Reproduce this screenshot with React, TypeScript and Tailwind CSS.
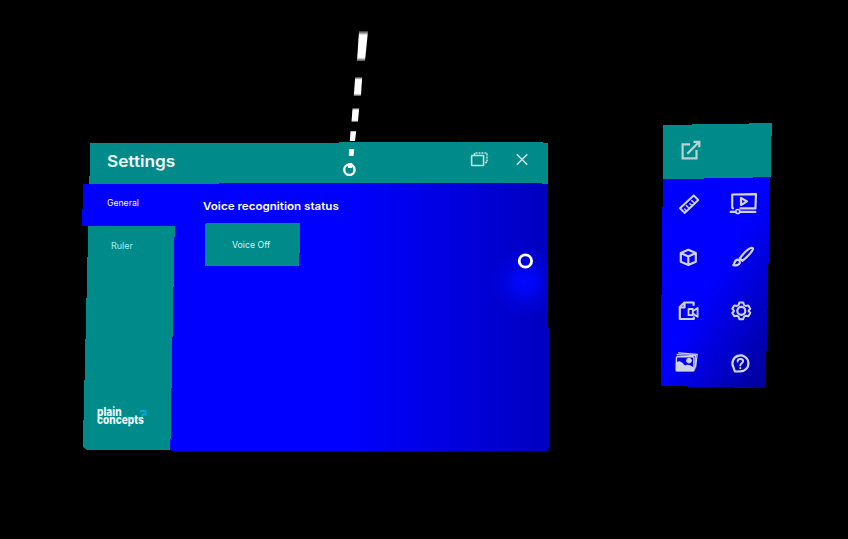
import type { ReactNode } from 'react';

const ICON = '#d0d3e6';

/** One cell of the tool palette; the view box is expressed in scene coordinates. */
function Tool({ box, label, children }: { box: string; label: string; children: ReactNode }) {
  return (
    <button aria-label={label} className="block h-[53px] w-[53px]">
      <svg viewBox={box} className="h-[53px] w-[53px]" fill="none" stroke={ICON} strokeWidth="2.2" strokeLinejoin="round" strokeLinecap="round">
        {children}
      </svg>
    </button>
  );
}

function Header() {
  return (
    <header className="flex h-[42px] bg-[#008b8b] pl-[25px] [clip-path:polygon(8px_1px,257px_1px,257px_0,461px_0,461px_1px,466px_1px,466px_42px,460px_42px,460px_41px,137px_41px,137px_42px,7px_42px,7px_34px,8px_34px)]">
      <h1 className="w-[338px] pt-[7px] text-[16px] leading-[24px] font-semibold text-[#f2f7f7]">
        <span className="inline-block origin-left scale-x-[1.075]">Settings</span>
      </h1>
      <svg viewBox="445 142 103 42" className="h-[42px] w-[103px]" fill="none" stroke="#c9dddd" strokeWidth="1.6">
        <rect x="471.6" y="155.5" width="12" height="10" rx="0.5" />
        <path d="M474.5 155v-2h12.5v9.5h-3" strokeDasharray="2 1" />
        <path d="M516.8 154.2l10.5 10.5M527.3 154.2l-10.5 10.5" />
      </svg>
    </header>
  );
}

function Sidebar() {
  return (
    <nav className="h-[267px] w-[93px] text-[9px] leading-[12px] text-white">
      <div className="h-[42px] bg-[#0000ff] pt-[13px] pl-[25px] [clip-path:polygon(1px_0,93px_0,93px_42px,0_42px,0_25px,1px_25px)]">
        <span className="inline-block origin-left scale-x-[0.96]">General</span>
      </div>
      <div className="flex h-[224px] flex-col justify-between bg-[#008b8b] [clip-path:polygon(6px_0,93px_0,93px_11px,92px_11px,92px_61px,91px_61px,91px_111px,90px_111px,90px_162px,89px_162px,89px_213px,88px_213px,88px_224px,5px_224px,1px_221px,1px_194px,2px_194px,2px_154px,3px_154px,3px_113px,4px_113px,4px_72px,5px_72px,5px_31px,6px_31px)]">
        <div className="pt-[14px] pl-[29px] text-[#a9eeee]">
          <span className="inline-block origin-left">Ruler</span>
        </div>
        <div className="flex h-[42px] pl-[15px] text-[11.5px] leading-[8px] font-extrabold text-[#eef7f7]">
          <div className="w-[49px]">
            <div className="w-fit origin-left scale-x-[0.88]">plain</div>
            <div className="w-fit origin-left scale-x-[0.88]">concepts</div>
          </div>
          <svg viewBox="0 0 8 9" className="-ml-[7px] h-[9px] w-[8px] translate-y-[1px]" fill="none" stroke="#00a9e0" strokeWidth="2">
            <path d="M1 2h5.5v4.5M2.5 7l3-2.5" />
          </svg>
        </div>
      </div>
    </nav>
  );
}

function SettingsWindow() {
  return (
    <section className="absolute top-[142px] left-[82px] h-[309px] w-[467px]">
      <div className="absolute inset-x-0 top-[41px] h-[268px] bg-[linear-gradient(90deg,#0000ff_56%,#0000e4_76%,#0000ce_90%,#0000c0_100%)] [clip-path:polygon(88px_0,460px_0,461px_1px,465px_1px,466px_3px,466px_145px,467px_145px,467px_265px,465px_268px,90px_268px,88px_266px)]">
        <div className="h-full w-full bg-[radial-gradient(circle_at_443px_99px,#0008ff_0px,#0008ffcc_9px,#0008ff55_20px,#0008ff00_35px)]" />
      </div>
      <div className="relative">
        <Header />
        <div className="flex">
          <Sidebar />
          <main className="pt-[14px] pl-[28px]">
            <h2 className="text-[11px] leading-[16px] font-semibold whitespace-nowrap text-white">
              <span className="inline-block origin-left scale-x-[1.055]">Voice recognition status</span>
            </h2>
            <button className="mt-[9px] ml-[2px] flex h-[43px] w-[95px] items-center bg-[#008b8b] pl-[27px] text-[9px] text-[#dcf4f4] [clip-path:polygon(1px_0,95px_0,95px_30px,94px_30px,94px_43px,0_43px,0_1px,1px_1px)]">
              <span className="inline-block origin-left scale-x-[0.97] whitespace-nowrap">Voice Off</span>
            </button>
          </main>
        </div>
      </div>
    </section>
  );
}

function ToolPalette() {
  return (
    <section className="absolute top-[123px] left-[661px] w-[111px]">
      <div className="h-[56px] bg-[#008b8b] [clip-path:polygon(2px_2px,31px_2px,31px_1px,88px_1px,88px_0,111px_0,111px_13px,110px_13px,110px_54px,92px_54px,92px_55px,43px_55px,43px_56px,2px_56px)]">
        <svg viewBox="661 123 111 56" className="h-[56px] w-[111px]" fill="none" stroke="#b9d3d3" strokeWidth="2.2">
          <path d="M690 144.4H682.6V158.3H696.5V150" />
          <path d="M687.3 153.8L698.5 142.5M693.5 141.9H699.3V147.3" />
        </svg>
      </div>
      <div className="-mt-[2px] grid h-[211px] grid-cols-[53px_53px] bg-[linear-gradient(120deg,#0000ff_48%,#0000c4_76%,#000090_100%)] pt-[1px] pl-[1px] [clip-path:polygon(2px_2px,43px_2px,43px_1px,92px_1px,92px_0,109px_0,109px_13px,108px_13px,108px_87px,107px_87px,107px_131px,106px_131px,106px_174px,105px_174px,105px_211px,72px_211px,72px_210px,26px_210px,26px_209px,0_209px,0_118px,1px_118px,1px_30px,2px_30px)]">
        <Tool label="Ruler" box="662 178 53 53">
          <path d="M680 208.3L693.7 195.4 698.3 200 684.6 212.9Z" strokeWidth="2" />
          <path d="M686.5 211L684.5 209M689.2 208.5L686.3 205.6M692 205.8L690 203.8M694.6 203.3L691.7 200.4" strokeWidth="1.4" />
        </Tool>
        <Tool label="Video" box="715 178 53 53">
          <path d="M733 208.3L732.2 207.7V194.5L756 194.1 755.4 208.4H740.5M730.7 211.9H735.3M740.3 211.9H755.4" />
          <circle cx="737.8" cy="211.5" r="2" strokeWidth="1.7" />
          <path d="M741 198V205L747 201.4Z" />
        </Tool>
        <Tool label="Model" box="662 231 53 53">
          <path d="M688.3 249.8L695.8 253.1V261.7L688.3 265.1 680.8 261.7V253.1ZM680.8 253.1L688.3 256.6 695.8 253.1M688.3 256.6V265.1" />
        </Tool>
        <Tool label="Draw" box="715 231 53 53">
          <path d="M739.8 258.3C743.5 253.5 747 248.8 751.5 247.8Q753.6 247.8 752.6 250C750.3 254.2 746.4 257.6 742.4 260.8Z" />
          <path d="M733.2 265C734.8 264.8 734 260 737.3 259.6 740 259.6 740.8 262.3 739 264.2 737.2 265.6 735 265.7 733.2 265Z" />
        </Tool>
        <Tool label="Recording" box="662 284 53 53">
          <path d="M693.6 305V302.5H684.3L679.8 307V319H693.8V317.3M680 307.5H684.5V302.8" />
          <rect x="688.5" y="309" width="4.3" height="6.2" strokeWidth="1.8" />
          <path d="M693 311L697.6 308V316.8L693 313.8" strokeWidth="1.8" />
        </Tool>
        <Tool label="Settings" box="715 284 53 53">
          <path d="M739.4 302.4H743.2L744 305 745.8 306 748.3 305.4 750.3 308.7 748.5 310.9 750.3 313 748.3 316.3 745.8 315.7 744 316.8 743.2 319.2H739.4L738.6 316.8 736.8 315.7 734.3 316.3 732.3 313 734.1 310.9 732.3 308.7 734.3 305.4 736.8 306 738.6 305Z" strokeWidth="2" />
          <circle cx="741.3" cy="310.8" r="4" />
        </Tool>
        <Tool label="Gallery" box="662 337 53 53">
          <rect x="676.4" y="356.8" width="17.4" height="13.8" rx="1" strokeWidth="1.4" />
          <path d="M676.2 371V363.5Q679 360 682.2 363.5L685 366.5Q688 363.6 693.8 368.2V371Z" fill={ICON} strokeWidth="1.2" />
          <circle cx="689" cy="360.7" r="2.4" fill={ICON} strokeWidth="1" />
          <path d="M677 354.6L695.5 355.7 694.8 369M678.5 352.9L697.2 354.3 695.7 367" strokeWidth="1.2" />
        </Tool>
        <Tool label="Help" box="715 337 53 53">
          <path d="M734.9 371.5L733.5 367.4A8 8 0 1 1 740 371.4Z" />
          <path d="M737.6 361.4Q737.8 359 740.4 359T743.1 361.3C743 363.2 740.3 363.5 740.3 365.6M740.3 368.1V368.3" strokeWidth="2" />
        </Tool>
      </div>
    </section>
  );
}

export default function App() {
  return (
    <div className="relative h-[539px] w-[848px] overflow-hidden bg-black font-[Inter,'Open_Sans',sans-serif]">
      <div className="absolute top-[135px] left-[457px] h-[10px] w-[70px] bg-linear-to-r from-[#040404] to-black" />
      <SettingsWindow />
      <ToolPalette />
      <svg viewBox="0 0 848 539" className="pointer-events-none absolute inset-0 h-[539px] w-[848px]" fill="none">
        <defs>
          <linearGradient id="ray" x1="0" y1="0" x2="0" y2="1">
            <stop offset="0" stopColor="#fff" stopOpacity="0.2" />
            <stop offset="0.14" stopColor="#fff" />
            <stop offset="0.88" stopColor="#fff" />
            <stop offset="1" stopColor="#fff" stopOpacity="0.3" />
          </linearGradient>
        </defs>
        <g fill="url(#ray)">
          <path d="M359 31H368L365 61H357Z" />
          <path d="M355.2 77H362.2L360.9 96H353.8Z" />
          <path d="M352.5 108H359.2L357.9 122H351.5Z" />
        </g>
        <path d="M350.5 131.3H356.2L355 141H349.8ZM349.2 149H354.2L353.5 156H348.8ZM348 163H352.2V168H348Z" fill="#fff" />
        <circle cx="349.4" cy="169.7" r="5.2" stroke="#fff" strokeWidth="2.4" />
        <circle cx="525.4" cy="261" r="6.2" stroke="#fff" strokeWidth="2.8" />
      </svg>
    </div>
  );
}
